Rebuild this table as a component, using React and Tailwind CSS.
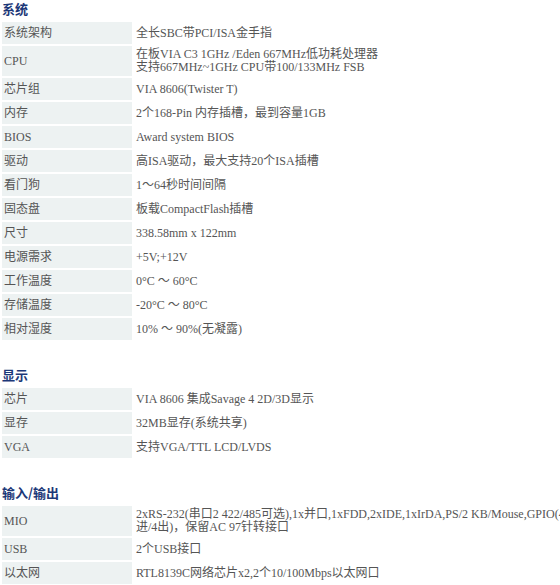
import React from "react";

const sections = [
	{
		title: "系统",
		rows: [
			["系统架构", ["全长SBC带PCI/ISA金手指"]],
			["CPU", ["在板VIA C3 1GHz /Eden 667MHz低功耗处理器", "支持667MHz~1GHz CPU带100/133MHz FSB"]],
			["芯片组", ["VIA 8606(Twister T)"]],
			["内存", ["2个168-Pin 内存插槽，最到容量1GB"]],
			["BIOS", ["Award system BIOS"]],
			["驱动", ["高ISA驱动，最大支持20个ISA插槽"]],
			["看门狗", ["1～64秒时间间隔"]],
			["固态盘", ["板载CompactFlash插槽"]],
			["尺寸", ["338.58mm x 122mm"]],
			["电源需求", ["+5V;+12V"]],
			["工作温度", ["0°C ～ 60°C"]],
			["存储温度", ["-20°C ～ 80°C"]],
			["相对湿度", ["10% ～ 90%(无凝露)"]],
		],
	},
	{
		title: "显示",
		rows: [
			["芯片", ["VIA 8606 集成Savage 4 2D/3D显示"]],
			["显存", ["32MB显存(系统共享)"]],
			["VGA", ["支持VGA/TTL LCD/LVDS"]],
		],
	},
	{
		title: "输入/输出",
		rows: [
			["MIO", ["2xRS-232(串口2 422/485可选),1x并口,1xFDD,2xIDE,1xIrDA,PS/2 KB/Mouse,GPIO(4", "进/4出)，保留AC 97针转接口"]],
			["USB", ["2个USB接口"]],
			["以太网", ["RTL8139C网络芯片x2,2个10/100Mbps以太网口"]],
		],
	},
];

const SpecRow = ({ label, lines }) => {
	const tall = lines.length > 1;
	return (
		<div className={`flex gap-[2px] ${tall ? "h-[30px]" : "h-[22px]"}`}>
			<div className="w-[130px] shrink-0 bg-[#edf2f2] pl-[2px] flex items-center">{label}</div>
			<div className="flex-1 pl-[2px] flex flex-col justify-center leading-[13px] whitespace-nowrap">
				{lines.map((l) => (
					<div key={l}>{l}</div>
				))}
			</div>
		</div>
	);
};

const App = () => {
	return (
		<div
			className="w-[560px] h-[585px] overflow-hidden bg-white text-[12px] text-[#555555] pl-[2px]"
			style={{ fontFamily: '"Liberation Serif", "Noto Sans CJK SC", serif' }}
		>
			{sections.map((s, i) => (
				<div key={s.title} className={i > 0 ? "mt-[26px]" : ""}>
					{/* Section heading */}
					<div
						className="h-[20px] flex items-center pb-[2px] text-[13px] font-bold text-[#1c3878]"
						style={{ fontFamily: '"Noto Sans CJK SC", sans-serif' }}
					>
						{s.title}
					</div>
					<div className="mt-[2px] flex flex-col gap-[2px]">
						{s.rows.map(([label, lines]) => (
							<SpecRow key={label} label={label} lines={lines} />
						))}
					</div>
				</div>
			))}
		</div>
	);
};

export default App;
